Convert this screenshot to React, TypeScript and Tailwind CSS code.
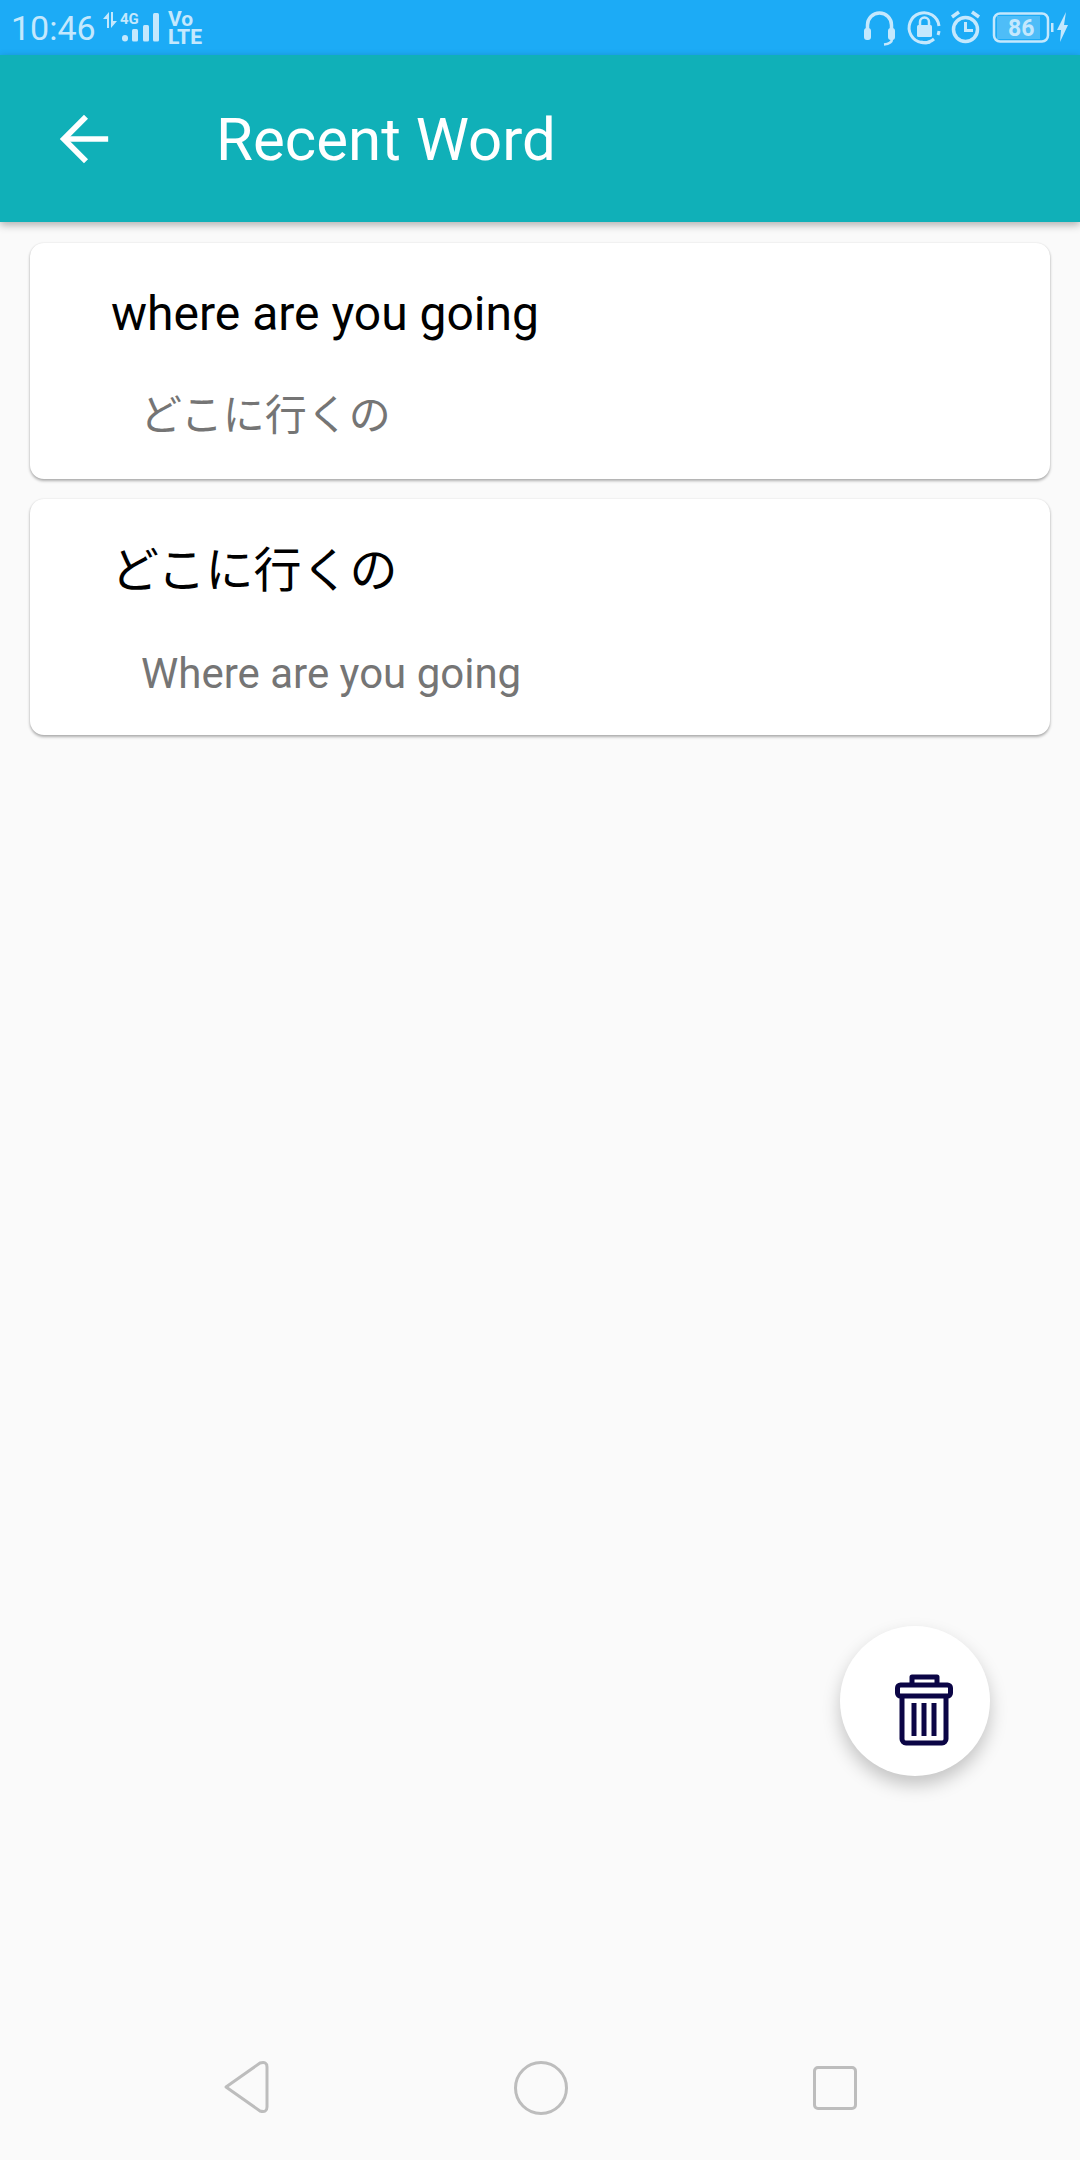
import { ArrowLeft } from 'lucide-react';

function SignalIcons() {
  return (
    <svg width="104" height="40" viewBox="0 0 104 40" fill="#c4e8fd">
      {/* up/down arrows */}
      <path d="M3 11 9 4v16H7v-9zM11 4h2v9h4l-6 7z" />
      {/* 4G */}
      <text x="20" y="16" fontSize="15" fontWeight="700" fontFamily="Roboto, sans-serif">4G</text>
      {/* bars */}
      <rect x="22" y="27" width="6" height="6.5" rx="3" />
      <rect x="32" y="21" width="6" height="12.5" rx="1.5" />
      <rect x="43" y="17" width="6" height="16.5" rx="1.5" />
      <rect x="53" y="5" width="6" height="28.5" rx="1.5" />
      <text x="68" y="17.5" fontSize="21" fontWeight="700" fontFamily="Roboto, sans-serif">Vo</text>
      <text x="68" y="35.5" fontSize="21" fontWeight="800" fontFamily="Roboto, sans-serif" textLength="34">LTE</text>
    </svg>
  );
}

function StatusRight() {
  return (
    <svg width="205" height="40" viewBox="0 0 205 40" fill="none" stroke="#c4e8fd">
      {/* headphones */}
      <path d="M3.5 24v-7a12 12 0 0 1 24 0v7" strokeWidth="3.5" />
      <rect x="0" y="20" width="7" height="12" rx="3" fill="#c4e8fd" stroke="none" />
      <rect x="24" y="20" width="7" height="12" rx="3" fill="#c4e8fd" stroke="none" />
      <path d="M28 31c0 4-3 5-8 5.5" strokeWidth="2.5" />
      {/* lock with rotation */}
      <path d="M70 31a15 15 0 1 1 5-13" strokeWidth="3" />
      <path d="M75 23a15 15 0 0 1-1 4M57 34a15 15 0 0 0 9 0" strokeWidth="3" />
      <rect x="53" y="17" width="15" height="12" rx="1.5" fill="#c4e8fd" stroke="none" />
      <path d="M56 18v-4a4.5 4.5 0 0 1 9 0v4" strokeWidth="2.5" />
      {/* alarm */}
      <circle cx="101.5" cy="21.5" r="12" strokeWidth="3.5" />
      <path d="M101.5 14v8.5h7.5" strokeWidth="3" />
      <path d="M88 9l7-5M115 9l-7-5" strokeWidth="3.5" />
      {/* battery */}
      <rect x="130" y="5.5" width="54" height="28" rx="6" strokeWidth="2.5" />
      <rect x="133" y="8" width="43" height="23" fill="#c4e8fd" fillOpacity="0.3" stroke="none" />
      <text x="144" y="28" fontSize="23" fontWeight="700" fontFamily="Roboto, sans-serif" fill="#c4e8fd" stroke="none">86</text>
      <rect x="187" y="15" width="2.5" height="9" fill="#c4e8fd" stroke="none" />
      {/* bolt */}
      <path d="M202 4l-9 18h4l-1 12 8-17h-4z" fill="#c4e8fd" stroke="none" />
    </svg>
  );
}

function TrashIcon() {
  return (
    <svg width="58" height="72" viewBox="0 0 58 72" fill="none" stroke="#0b0545" strokeWidth="5" strokeLinejoin="round">
      <path d="M17 11V3h25v8" />
      <rect x="2.5" y="11" width="53" height="11" rx="3" />
      <path d="M7 22v43a4 4 0 0 0 4 4h36a4 4 0 0 0 4-4V22" />
      <path d="M19 29v33M29 29v33M39 29v33" />
    </svg>
  );
}

const cards = [
  { word: 'where are you going', wordClass: 'pt-0', meaning: 'どこに行くの', meaningClass: 'mt-[46px] pl-[110px]' },
  { word: 'どこに行くの', wordClass: 'pt-[1px]', meaning: 'Where are you going', meaningClass: 'mt-[48px] pl-[111px]' },
];

export default function App() {
  return (
    <div className="relative flex h-[2160px] w-[1080px] flex-col overflow-hidden bg-[#fafafa] font-['Roboto','Noto_Sans_CJK_JP',sans-serif]">
      {/* Status bar */}
      <div className="flex h-[55px] items-center justify-between bg-[#1cabf6] pl-[11px] pr-[11px]">
        <div className="flex items-center gap-[6px]">
          <span className="w-[83px] text-[34px] leading-none text-[#c4e8fd]">10:46</span>
          <SignalIcons />
        </div>
        <StatusRight />
      </div>

      {/* App bar */}
      <div className="relative z-10 flex h-[167px] items-center bg-[#10b0b8] pl-[48px] shadow-[0_3px_8px_rgba(0,0,0,0.3)]">
        <ArrowLeft size={76} color="#ffffff" strokeWidth={1.8} strokeLinecap="butt" strokeLinejoin="miter" />
        <h1 className="ml-[92px] pt-[2px] text-[60px] leading-none font-normal text-white">Recent Word</h1>
      </div>

      {/* Word cards */}
      <div className="flex flex-col gap-5 px-[30px] pt-[21px]">
        {cards.map((card, index) => (
          <div
            key={index}
            className="flex h-[236px] flex-col rounded-[14px] bg-white pt-[43px] shadow-[0_2px_3px_rgba(0,0,0,0.3),0_0_2px_rgba(0,0,0,0.1)]"
          >
            <div className={`h-[56px] pl-[81px] text-[48px] leading-[56px] text-black ${card.wordClass}`}>{card.word}</div>
            <div className={`h-[56px] text-[42px] leading-[56px] text-[#757575] ${card.meaningClass}`}>{card.meaning}</div>
          </div>
        ))}
      </div>

      {/* Delete button */}
      <button className="absolute left-[840px] top-[1626px] flex h-[150px] w-[150px] items-center justify-center rounded-full bg-white pl-[17px] pt-[18px] shadow-[0_9px_18px_rgba(0,0,0,0.22)]">
        <TrashIcon />
      </button>

      {/* Nav bar */}
      <div className="mt-auto flex h-[120px] items-start justify-between px-[223px] pt-[20px]">
        <svg width="46" height="54" viewBox="0 0 46 54" fill="none" stroke="#bdbdbd" strokeWidth="3" strokeLinejoin="round">
          <path d="M3 27 37 3q7-2 7 4v40q0 6-7 4z" />
        </svg>
        <div className="mt-[1px] h-[54px] w-[54px] rounded-full border-[3px] border-[#bdbdbd]" />
        <div className="mt-[6px] h-[44px] w-[44px] rounded-[5px] border-[3px] border-[#bdbdbd]" />
      </div>
    </div>
  );
}
